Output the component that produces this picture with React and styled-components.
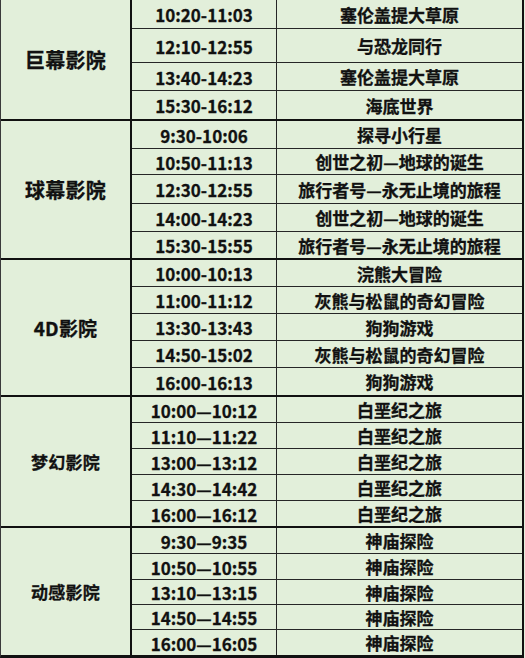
import React from 'react'
import styled, { createGlobalStyle } from 'styled-components'

const GlobalStyle = createGlobalStyle`
    html, body {
        margin: 0;
        padding: 0;
        background: #e3efdb;
    }
    body {
        font-family: "Noto Sans CJK SC", "Noto Sans", sans-serif;
        color: #111;
    }
`

const Table = styled.section`
    width: 524px;
    display: flex;
    flex-direction: column;
    background: #e2efda;
    border-left: 1px solid #3a3a3a;
    border-right: 2px solid #111;
    border-bottom: 3px solid #111;
    box-sizing: border-box;
`

const Group = styled.div`
    display: flex;
    border-bottom: ${props => props.$last ? 'none' : '2px solid #111'};
`

const HallCell = styled.div`
    width: 129px;
    flex-shrink: 0;
    display: flex;
    align-items: center;
    justify-content: center;
    border-right: 2px solid #111;
    font-weight: 700;
    font-size: ${props => props.$size}px;
    letter-spacing: 0.2px;
    -webkit-text-stroke: 0.3px #111;
`

const Rows = styled.div`
    flex: 1;
    display: flex;
    flex-direction: column;
`

const Row = styled.div`
    display: grid;
    grid-template-columns: 145px 1fr;
    height: ${props => props.$h}px;
    box-sizing: border-box;
    border-bottom: ${props => props.$last ? 'none' : '1px solid #262626'};
`

const Cell = styled.div`
    display: flex;
    align-items: center;
    justify-content: center;
    font-weight: 700;
    font-size: 17px;
    line-height: 1;
    white-space: nowrap;
    -webkit-text-stroke: 0.3px #111;
    border-right: ${props => props.$divider ? '1px solid #262626' : 'none'};
`

const TimeCell = styled(Cell)`
    font-size: 17px;
    padding-top: 1px;
`

const halls = [
    {
        name: '巨幕影院', size: 20,
        shows: [
            ['10:20-11:03', '塞伦盖提大草原', 29],
            ['12:10-12:55', '与恐龙同行', 34],
            ['13:40-14:23', '塞伦盖提大草原', 28],
            ['15:30-16:12', '海底世界', 28],
        ]
    },
    {
        name: '球幕影院', size: 20,
        shows: [
            ['9:30-10:06', '探寻小行星', 28],
            ['10:50-11:13', '创世之初—地球的诞生', 26],
            ['12:30-12:55', '旅行者号—永无止境的旅程', 29],
            ['14:00-14:23', '创世之初—地球的诞生', 28],
            ['15:30-15:55', '旅行者号—永无止境的旅程', 26],
        ]
    },
    {
        name: '4D影院', size: 19,
        shows: [
            ['10:00-10:13', '浣熊大冒险', 27],
            ['11:00-11:12', '灰熊与松鼠的奇幻冒险', 27],
            ['13:30-13:43', '狗狗游戏', 27],
            ['14:50-15:02', '灰熊与松鼠的奇幻冒险', 27],
            ['16:00-16:13', '狗狗游戏', 27],
        ]
    },
    {
        name: '梦幻影院', size: 17,
        shows: [
            ['10:00—10:12', '白垩纪之旅', 26],
            ['11:10—11:22', '白垩纪之旅', 26],
            ['13:00—13:12', '白垩纪之旅', 26],
            ['14:30—14:42', '白垩纪之旅', 26],
            ['16:00—16:12', '白垩纪之旅', 25],
        ]
    },
    {
        name: '动感影院', size: 17,
        shows: [
            ['9:30—9:35', '神庙探险', 26],
            ['10:50—10:55', '神庙探险', 26],
            ['13:10—13:15', '神庙探险', 25],
            ['14:50—14:55', '神庙探险', 25],
            ['16:00—16:05', '神庙探险', 25],
        ]
    },
]

function App() {
    return (
        <>
            <GlobalStyle />
            <Table>
                {halls.map((hall, gi) => (
                    <Group key={hall.name} $last={gi === halls.length - 1}>
                        <HallCell $size={hall.size}>{hall.name}</HallCell>
                        <Rows>
                            {hall.shows.map(([time, film, h], ri) => (
                                <Row key={time} $h={h} $last={ri === hall.shows.length - 1}>
                                    <TimeCell $divider>{time}</TimeCell>
                                    <Cell>{film}</Cell>
                                </Row>
                            ))}
                        </Rows>
                    </Group>
                ))}
            </Table>
        </>
    )
}

export default App
